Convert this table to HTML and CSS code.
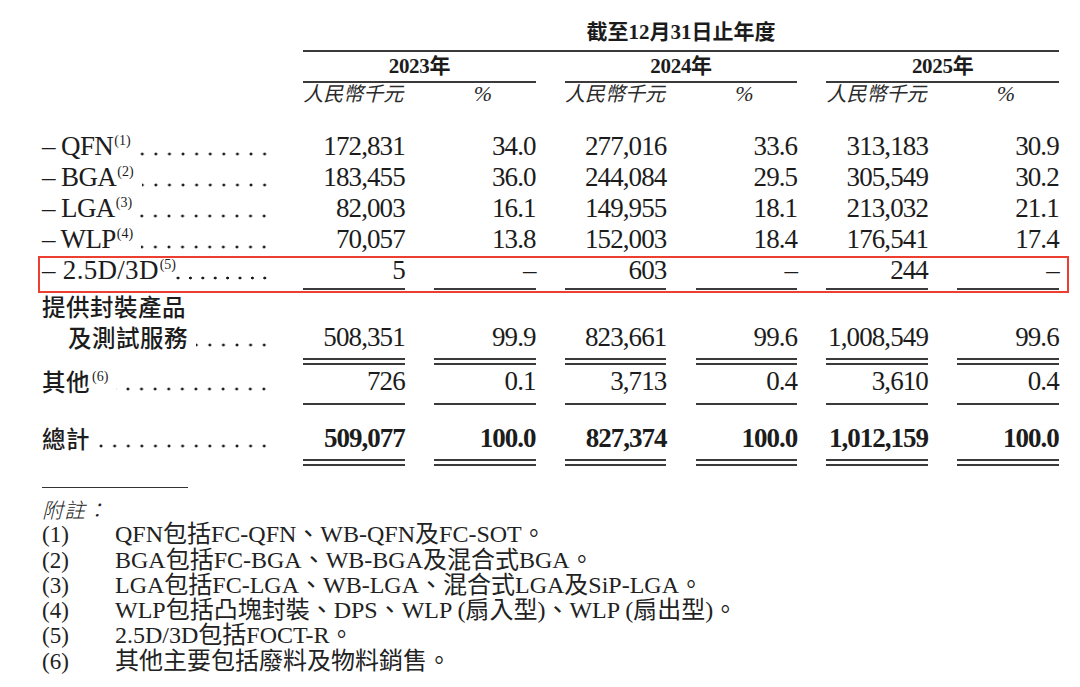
FILE: index.html
```html
<!DOCTYPE html>
<html lang="zh-Hant">
<head>
<meta charset="utf-8">
<title>收入明細</title>
<link rel="stylesheet" href="styles.css">
</head>
<body>
<div class="page">
  <div class="row head">
    <div class="lab"></div>
    <div class="span6 title">截至12月31日止年度</div>
  </div>
  <div class="row years">
    <div class="lab"></div>
    <div class="span2 yr">2023年</div>
    <div class="span2 yr">2024年</div>
    <div class="span2 yr">2025年</div>
  </div>
  <div class="row units">
    <div class="lab"></div>
    <div class="unit">人民幣千元</div><div class="pc">%</div>
    <div class="unit">人民幣千元</div><div class="pc">%</div>
    <div class="unit">人民幣千元</div><div class="pc">%</div>
  </div>

  <div class="row data first">
    <div class="lab"><span class="name">– QFN<sup>(1)</sup></span><span class="dots"></span></div>
    <div class="num">172,831</div><div class="num">34.0</div>
    <div class="num">277,016</div><div class="num">33.6</div>
    <div class="num">313,183</div><div class="num">30.9</div>
  </div>
  <div class="row data">
    <div class="lab"><span class="name">– BGA<sup>(2)</sup></span><span class="dots"></span></div>
    <div class="num">183,455</div><div class="num">36.0</div>
    <div class="num">244,084</div><div class="num">29.5</div>
    <div class="num">305,549</div><div class="num">30.2</div>
  </div>
  <div class="row data">
    <div class="lab"><span class="name">– LGA<sup>(3)</sup></span><span class="dots"></span></div>
    <div class="num">82,003</div><div class="num">16.1</div>
    <div class="num">149,955</div><div class="num">18.1</div>
    <div class="num">213,032</div><div class="num">21.1</div>
  </div>
  <div class="row data">
    <div class="lab"><span class="name">– WLP<sup>(4)</sup></span><span class="dots"></span></div>
    <div class="num">70,057</div><div class="num">13.8</div>
    <div class="num">152,003</div><div class="num">18.4</div>
    <div class="num">176,541</div><div class="num">17.4</div>
  </div>
  <div class="row data under hl">
    <div class="lab"><span class="name wide">– 2.5D/3D<sup>(5)</sup></span><span class="dots tight"></span></div>
    <div class="num">5</div><div class="num">–</div>
    <div class="num">603</div><div class="num">–</div>
    <div class="num">244</div><div class="num">–</div>
  </div>
  <div class="row data cap">
    <div class="lab"><span class="cjk">提供封裝產品</span></div>
  </div>
  <div class="row data dbl">
    <div class="lab"><span class="cjk indent">及測試服務</span><span class="dots"></span></div>
    <div class="num">508,351</div><div class="num">99.9</div>
    <div class="num">823,661</div><div class="num">99.6</div>
    <div class="num">1,008,549</div><div class="num">99.6</div>
  </div>
  <div class="row data under other">
    <div class="lab"><span class="cjk">其他<sup>(6)</sup></span><span class="dots"></span></div>
    <div class="num">726</div><div class="num">0.1</div>
    <div class="num">3,713</div><div class="num">0.4</div>
    <div class="num">3,610</div><div class="num">0.4</div>
  </div>
  <div class="row data dbl total">
    <div class="lab"><span class="cjk">總計</span><span class="dots"></span></div>
    <div class="num">509,077</div><div class="num">100.0</div>
    <div class="num">827,374</div><div class="num">100.0</div>
    <div class="num">1,012,159</div><div class="num">100.0</div>
  </div>

  <div class="notes">
    <div class="rule"></div>
    <div class="nh">附註：</div>
    <div class="note"><span class="nn">(1)</span><span>QFN包括FC-QFN、WB-QFN及FC-SOT。</span></div>
    <div class="note"><span class="nn">(2)</span><span>BGA包括FC-BGA、WB-BGA及混合式BGA。</span></div>
    <div class="note"><span class="nn">(3)</span><span>LGA包括FC-LGA、WB-LGA、混合式LGA及SiP-LGA。</span></div>
    <div class="note"><span class="nn">(4)</span><span>WLP包括凸塊封裝、DPS、WLP (扇入型)、WLP (扇出型)。</span></div>
    <div class="note"><span class="nn">(5)</span><span>2.5D/3D包括FOCT-R。</span></div>
    <div class="note"><span class="nn">(6)</span><span>其他主要包括廢料及物料銷售。</span></div>
  </div>
</div>
</body>
</html>
```

FILE: styles.css
```css
html, body {
  margin: 0;
  padding: 0;
  background: #ffffff;
}

body {
  color: #1c1c1c;
  font-family: "Liberation Serif", "Noto Sans CJK TC", serif;
}

.page {
  width: 1080px;
  height: 687px;
  overflow: hidden;
  padding: 19px 0 0 42px;
  box-sizing: border-box;
}

.row {
  display: grid;
  width: 1017px;
  grid-template-columns: 232px repeat(6, 101.5px);
  column-gap: 29.3px;
}

/* header */
.span6 { grid-column: span 6; }
.span2 { grid-column: span 2; }

.title {
  text-align: center;
  font-weight: 700;
  font-size: 21px;
  line-height: 26px;
  padding-bottom: 5px;
  border-bottom: 2px solid #3a3a3a;
}

.yr {
  text-align: center;
  font-weight: 700;
  font-size: 21px;
  line-height: 28px;
  padding-bottom: 1px;
  border-bottom: 2px solid #3a3a3a;
  letter-spacing: -0.3px;
}

.units {
  margin-top: 1px;
  font-style: italic;
  font-size: 20px;
  line-height: 20px;
  color: #2a2a2a;
}
.unit { white-space: nowrap; }
.pc { text-align: center; font-size: 22px; padding-right: 4px; }

/* data */
.data {
  font-size: 27px;
  line-height: 31px;
}
.data.first { margin-top: 27px; }

.lab {
  display: flex;
  align-items: stretch;
  padding-right: 3px;
  white-space: nowrap;
}
.name { letter-spacing: -0.6px; }
.name.wide { letter-spacing: 0.3px; }
.dots {
  flex: 1;
  margin-left: 8px;
  background-image: radial-gradient(circle, #1c1c1c 1.2px, rgba(0,0,0,0) 1.75px);
  background-size: 13.6px 4px;
  background-repeat: repeat-x;
  background-position: right 0 top 21px;
}
.dots.tight { margin-left: 0; background-size: 12.4px 4px; }

sup {
  font-size: 14px;
  line-height: 0;
  vertical-align: 10px;
  letter-spacing: 0;
  margin-left: 1px;
}

.num {
  text-align: right;
  letter-spacing: -0.9px;
  white-space: nowrap;
}

.under .num {
  padding-bottom: 2px;
  border-bottom: 2px solid #3a3a3a;
}

.cjk {
  font-family: "Noto Sans CJK TC", sans-serif;
  font-size: 23.5px;
  font-weight: 500;
  letter-spacing: 0.5px;
}
.cjk sup { font-family: "Liberation Serif", serif; font-weight: 400; margin-left: 2px; }
.indent { margin-left: 26px; }

.cap { line-height: 32px; }

.dbl .num {
  padding-bottom: 5px;
  border-bottom: 7px double #3a3a3a;
}

.other { margin-top: 1px; }
.other .num { padding-bottom: 6px; }

.total { margin-top: 18px; font-weight: 700; }
.total .cjk { font-weight: 500; }
.total .num { padding-bottom: 5px; letter-spacing: -1px; }

/* highlight box */
.hl { position: relative; }
.hl::after {
  content: "";
  position: absolute;
  left: -4px;
  right: -10px;
  top: 1px;
  bottom: -3px;
  border: 2px solid #ec3f32;
}

/* notes */
.notes {
  margin-top: 21px;
  font-size: 24px;
  line-height: 25.3px;
  color: #222;
}
.rule {
  width: 146px;
  border-top: 1px solid #333;
  margin-bottom: 9px;
}
.nh {
  font-style: italic;
  font-family: "Noto Sans CJK TC", sans-serif;
  font-weight: 300;
  font-size: 21px;
  letter-spacing: 1px;
}
.note {
  display: grid;
  grid-template-columns: 73px auto;
}
.nn { font-size: 23px; }
```
